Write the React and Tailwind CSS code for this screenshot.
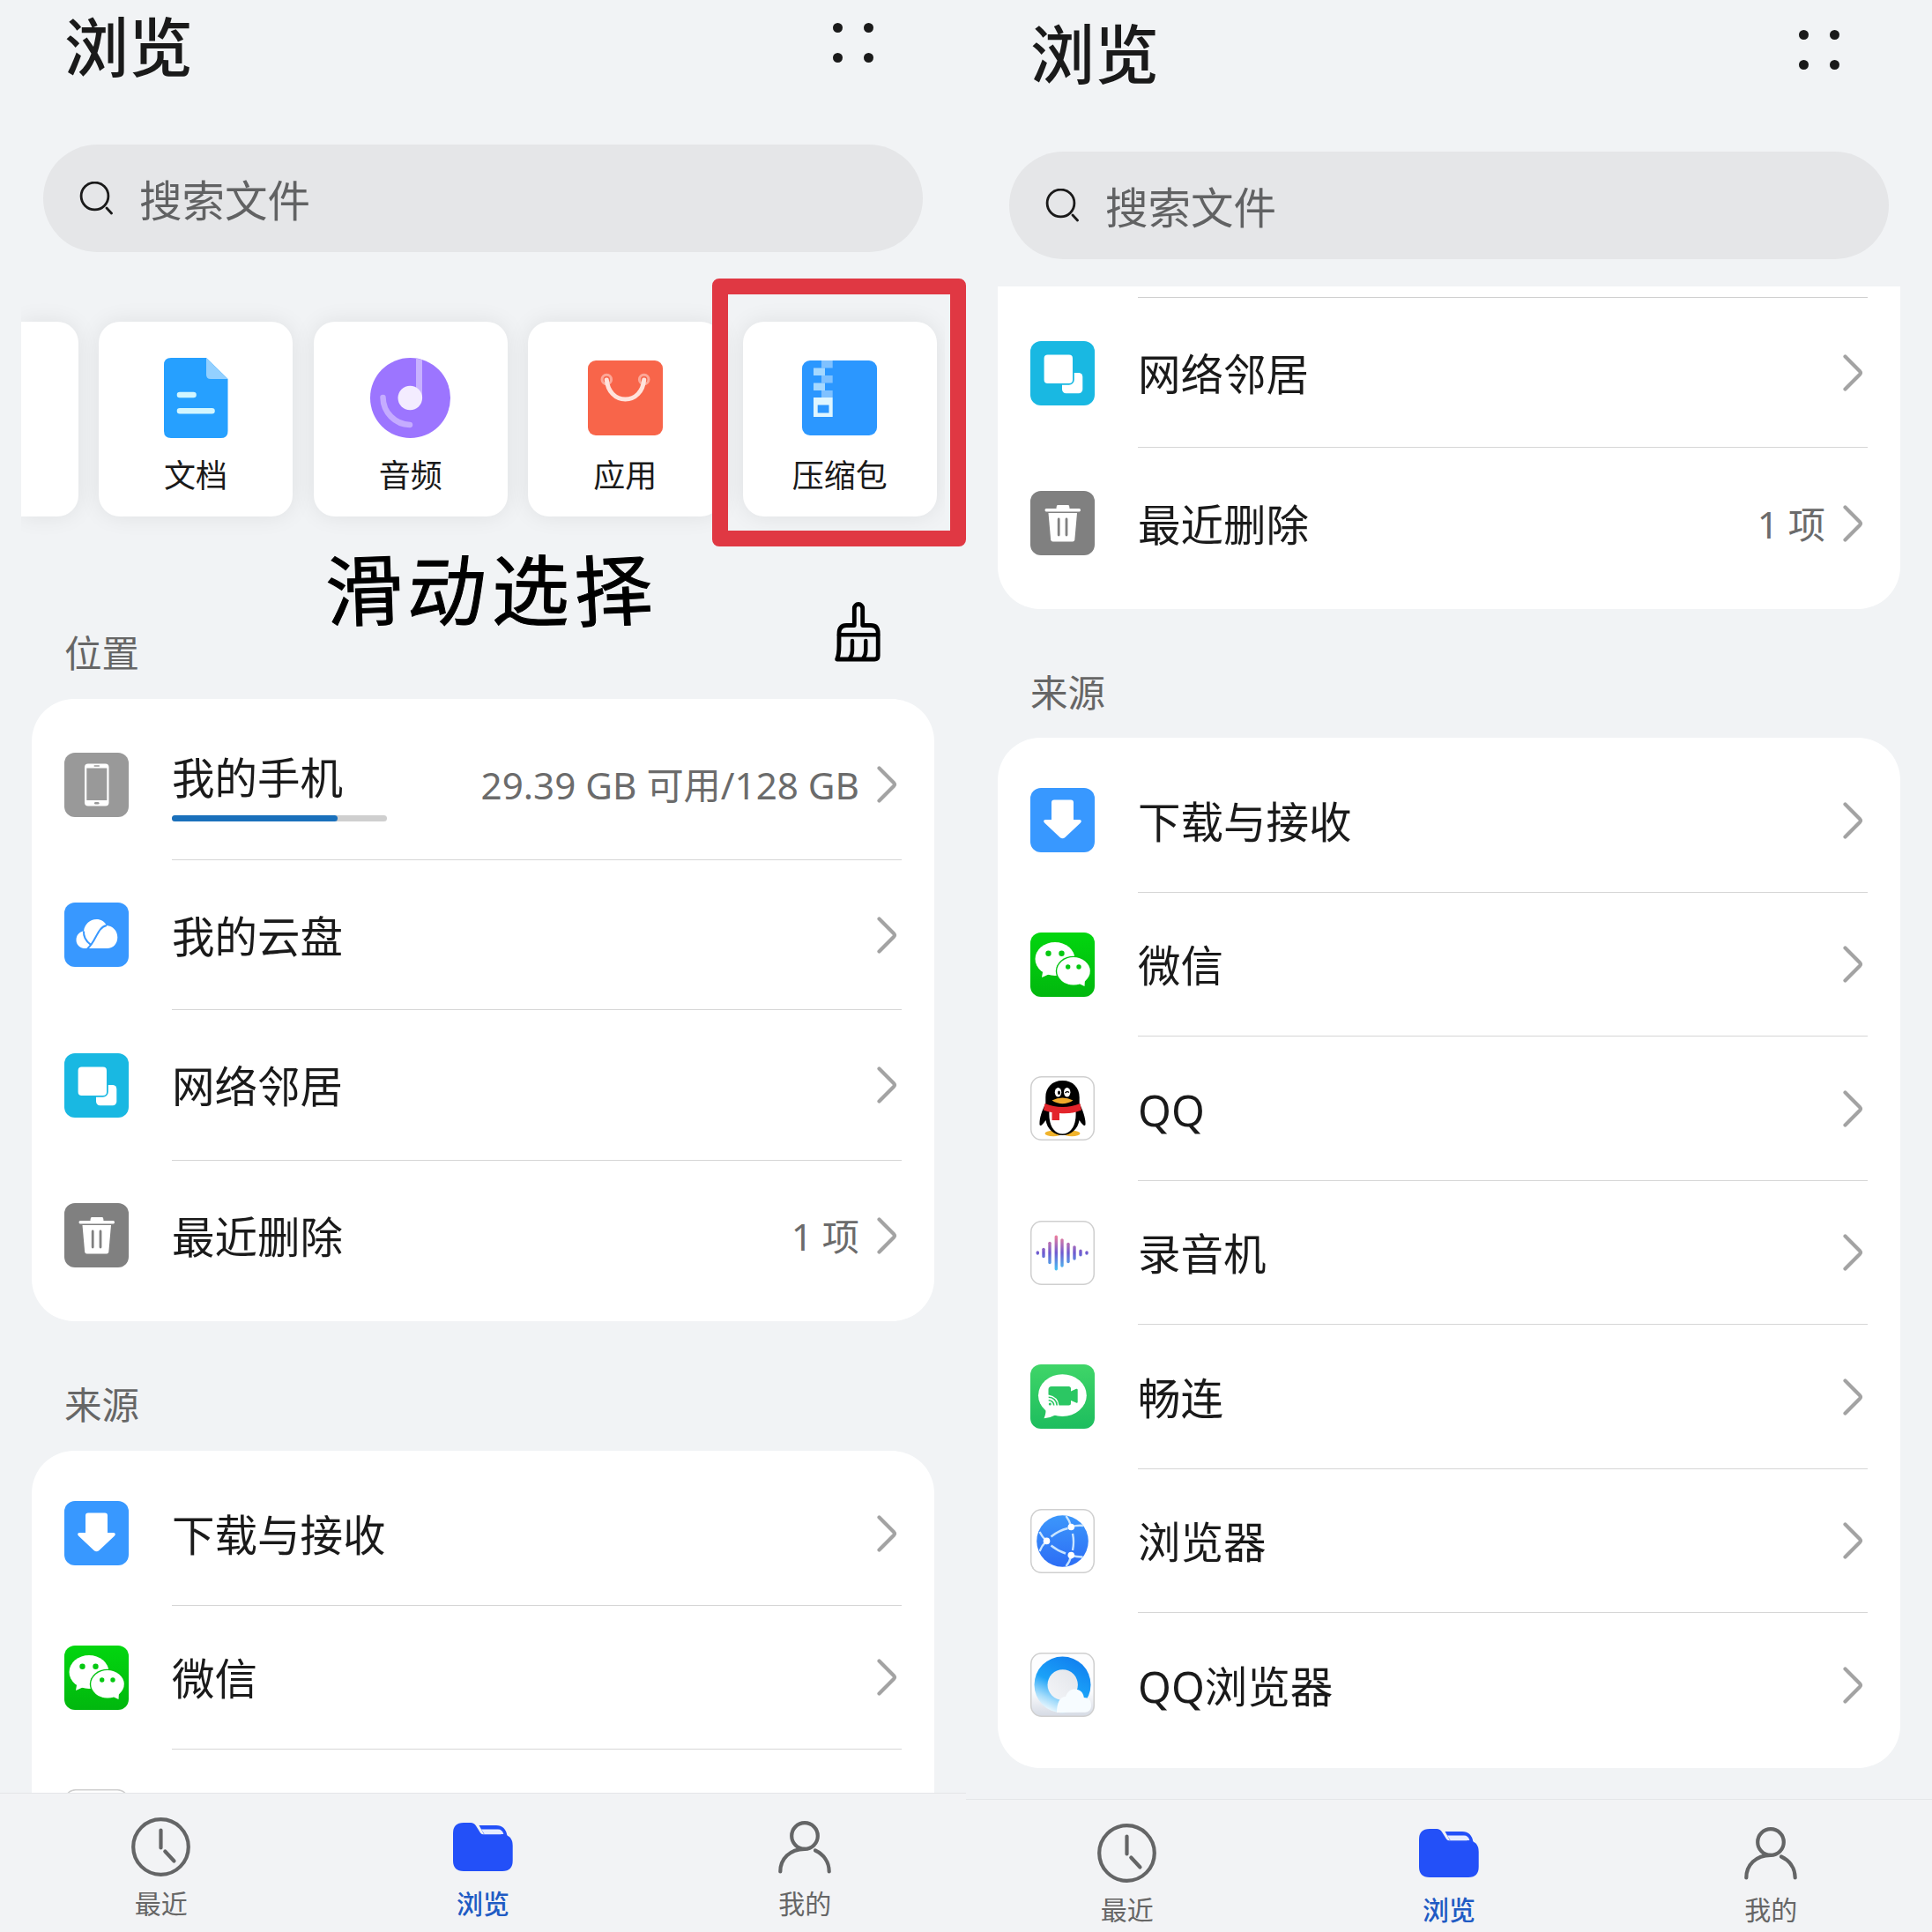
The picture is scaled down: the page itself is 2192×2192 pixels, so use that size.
import React from 'react';

//設定・検索など、両方の画面で使う小さなアイコン
function SearchIcon() {
  return (
    <svg className="w-[38px] h-[38px]" viewBox="0 0 38 38" fill="none" stroke="#1a1a1a" strokeWidth="2.8" strokeLinecap="round">
      <circle cx="17.5" cy="16.5" r="15.4" />
      <path d="M31 30L36.5 36" />
    </svg>
  );
}

function Chevron() {
  return (
    <svg className="w-[23px] h-[42px] shrink-0" viewBox="0 0 23 42" fill="none" stroke="#a3a3a3" strokeWidth="4.2" strokeLinecap="round" strokeLinejoin="round">
      <path d="M2.5 2.5L19.2 19.3Q20.7 21 19.2 22.7L2.5 39.5" />
    </svg>
  );
}

function BroomIcon() {
  return (
    <svg className="w-[53px] h-[68px]" viewBox="0 0 53 68" fill="none" stroke="#000" strokeWidth="4.8" strokeLinecap="round" strokeLinejoin="round">
      <path d="M22.3 26.5V7.2a4.7 4.7 0 0 1 9.4 0V26.5H41q8.2 0 8.2 9V61q0 4-4 4H2.6Q5 60 5 50V35.5q0-9 8.2-9H22.3" />
      <path d="M5 37.3H49" strokeWidth="4.4" />
      <path d="M20 44V55Q20 60 17 64M35.3 44V55Q35.3 60 32.3 64" strokeWidth="4.4" />
    </svg>
  );
}

//カテゴリーカードのアイコン
function DocIcon() {
  return (
    <svg className="w-[73px] h-[91px]" viewBox="0 0 73 91">
      <path d="M8 0H48L72.500 24V83q0 8-8 8H8q-8 0-8-8V8Q0 0 8 0z" fill="#26a0ff" />
      <path d="M48 0L72.500 24H53q-5 0-5-5z" fill="#93d0ff" />
      <path d="M18 42H33.500M18 60.300H54.500" stroke="#d2f6ff" strokeWidth="6.600" strokeLinecap="round" />
    </svg>
  );
}

function AudioIcon() {
  return (
    <svg className="w-[91px] h-[91px]" viewBox="0 0 91 91">
      <circle cx="45.500" cy="45.500" r="45.500" fill="#9c75ff" />
      <path d="M52 .5L59 2.200V46H52z" fill="#c8b1ff" />
      <circle cx="45.300" cy="45.500" r="13.800" fill="#f3ecff" />
      <path d="M14.500 45A31.500 31.500 0 0 0 45 76" fill="none" stroke="#c5acff" strokeWidth="6.500" strokeLinecap="round" />
    </svg>
  );
}

function BagIcon() {
  return (
    <svg className="w-[85px] h-[85px]" viewBox="0 0 85 85">
      <rect width="85" height="85" rx="9" fill="#f8654a" />
      <circle cx="21.300" cy="21.500" r="5.300" fill="none" stroke="#fca797" strokeWidth="3" />
      <circle cx="63.700" cy="21.500" r="5.300" fill="none" stroke="#fca797" strokeWidth="3" />
      <path d="M21.300 22C22.500 35 31 44 42.500 44S62.500 35 63.700 22" fill="none" stroke="#ffe3dc" strokeWidth="5" strokeLinecap="round" />
    </svg>
  );
}

function ZipIcon() {
  return (
    <svg className="w-[85px] h-[85px]" viewBox="0 0 85 85">
      <rect width="85" height="85" rx="9" fill="#2b97ff" />
      <path d="M22 0H34.700V8.500H22zM22 17H34.700V25.500H22zM22 34H34.700V42H22z" fill="#7fc1ff" />
      <path d="M13 8.500H26V17H13zM13 25.500H26V34H13z" fill="#a5d8ff" />
      <path fillRule="evenodd" d="M13 42H34.700V64H13zM17.700 50.500V59.500H30.500V50.500z" fill="#dff6ff" />
    </svg>
  );
}

//リストのアイコン（すべて 73 x 73）
function Tile({ fill, border, children }) {
  return (
    <svg className="w-[73px] h-[73px] shrink-0" viewBox="0 0 73 73">
      {border
        ? <rect x=".75" y=".75" width="71.500" height="71.500" rx="12" fill={fill} stroke="#cfcfcf" strokeWidth="1.500" />
        : <rect width="73" height="73" rx="12" fill={fill} />}
      {children}
    </svg>
  );
}

function PhoneTile() {
  return (
    <Tile fill="#999999">
      <rect x="23" y="12.500" width="27.500" height="48" rx="4" fill="#fff" />
      <rect x="25.300" y="17.500" width="23" height="36.500" fill="#999" />
      <rect x="33.500" y="14.300" width="6.500" height="1.500" rx=".7" fill="#999" />
      <rect x="34" y="56" width="5.500" height="2.600" rx="1.300" fill="#999" />
    </Tile>
  );
}

function CloudTile() {
  return (
    <Tile fill="#3898ff">
      <path d="M22 52C16.500 51 13.500 47 13.500 42.500C13.500 37 17 33 22 32.500C23 24.500 29 19 36.500 19C41.500 19 45.500 21.500 48 26C55 26.500 60.300 32 60.300 39.500C60.300 46.500 55.500 52 48.500 52z" fill="#fff" />
      <path d="M22 32.500C21.500 40 25 44 29.500 47.500M48 26C37 28 36.500 44 26 52.500" fill="none" stroke="#3898ff" strokeWidth="2" />
    </Tile>
  );
}

function NetworkTile() {
  return (
    <Tile fill="#19b8e2">
      <rect x="36" y="36" width="23.300" height="23.300" rx="4.500" fill="#fff" />
      <rect x="14.700" y="14.700" width="34.200" height="34.200" rx="5" fill="#fff" stroke="#19b8e2" strokeWidth="1.800" />
    </Tile>
  );
}

function TrashTile() {
  return (
    <Tile fill="#808080">
      <path d="M31 16H43Q44.300 16 44.500 20H55.500Q57 20 57 21.800T55.500 23.500H18Q16.500 23.500 16.500 21.800T18 20H29.500Q29.700 16 31 16z" fill="#fff" />
      <path d="M20.500 25H53L50.300 55.500Q50 57.500 48 57.500H25.500Q23.500 57.500 23.200 55.500z" fill="#fff" />
      <path d="M32.200 32V50M41 32V50" stroke="#808080" strokeWidth="2.800" strokeLinecap="round" />
    </Tile>
  );
}

function DownloadTile() {
  return (
    <Tile fill="#3898ff">
      <path d="M27 13.500H46Q49 13.500 49 16.500V36H56Q59 36.500 57 39.500L39.500 56Q36.500 58.500 33.500 56L16 39.500Q13.800 36.500 17 36H24V16.500Q24 13.500 27 13.500z" fill="#fff" />
    </Tile>
  );
}

function WechatTile() {
  return (
    <Tile fill="url(#wechat)">
      <defs>
        <linearGradient id="wechat" x1="0" y1="0" x2="0" y2="1">
          <stop offset="0" stopColor="#02d60f" />
          <stop offset="1" stopColor="#01b70e" />
        </linearGradient>
      </defs>
      <ellipse cx="28" cy="30" rx="22.500" ry="19" fill="#fff" />
      <path d="M14.500 42L13 51L23 46.500z" fill="#fff" />
      <circle cx="20.500" cy="23.700" r="3.200" fill="#05c811" />
      <circle cx="35.500" cy="23.700" r="3.200" fill="#05c811" />
      <ellipse cx="49" cy="43.800" rx="20.200" ry="17.100" fill="#02c30f" />
      <ellipse cx="49" cy="43.800" rx="18.800" ry="15.700" fill="#fff" />
      <path d="M62 53L61.500 61L53 57z" fill="#fff" />
      <circle cx="42.700" cy="39" r="2.700" fill="#05c811" />
      <circle cx="55" cy="39" r="2.700" fill="#05c811" />
    </Tile>
  );
}

function QQTile() {
  return (
    <Tile fill="#fff" border>
      <ellipse cx="26" cy="65" rx="9.500" ry="3.200" fill="#f0b32c" />
      <ellipse cx="47" cy="65" rx="9.500" ry="3.200" fill="#f0b32c" />
      <path d="M36.500 5C24.500 5 17.300 13 17.300 24V31C14.500 37 10 46 10.500 55Q11.500 58.500 17.500 50C19 60 27 67 36.500 67S54 60 55.500 50Q61.500 58.500 62.500 55C63 46 58.500 37 55.700 31V24C55.700 13 48.500 5 36.500 5z" fill="#000" />
      <path d="M21.500 40Q36.500 44 51.500 40C52.500 54 47 65.500 36.500 65.500S20.500 54 21.500 40z" fill="#fff" />
      <path d="M16.500 31Q36.500 39 56.500 31L58 38.500Q45 43.500 33 42V50H24.500V41Q19 40 15 38.500z" fill="#e3242b" />
      <ellipse cx="31.500" cy="18.300" rx="3.700" ry="5.300" fill="#fff" />
      <ellipse cx="41.700" cy="18.300" rx="3.700" ry="5.300" fill="#fff" />
      <ellipse cx="32.500" cy="18.800" rx="1.500" ry="2.200" fill="#000" />
      <path d="M39.500 19.200Q41.500 16.500 44 18.500" fill="none" stroke="#000" strokeWidth="1.300" />
      <path d="M24.500 27.500Q36.500 21.500 48.500 27.500Q36.500 35 24.500 27.500z" fill="#f0a92a" />
    </Tile>
  );
}

//[x, 高さ]
const bars = [[8.3, 4.5], [15, 11.5], [22, 25.5], [29.3, 40], [36, 32.5], [43, 23.5], [50, 16.5], [57, 8], [64, 4.5]];

function RecorderTile() {
  return (
    <Tile fill="#fff" border>
      <defs>
        <linearGradient id="wave" gradientUnits="userSpaceOnUse" x1="0" y1="16" x2="0" y2="57">
          <stop offset="0" stopColor="#f4809a" />
          <stop offset=".5" stopColor="#6f5bd0" />
          <stop offset="1" stopColor="#45c8f5" />
        </linearGradient>
      </defs>
      {bars.map(([x, h]) => (
        <rect key={x} x={x - 1.7} y={36.4 - h / 2} width="3.400" height={h} rx="1.700" fill="url(#wave)" />
      ))}
    </Tile>
  );
}

function MeetimeTile() {
  return (
    <Tile fill="url(#meetime)">
      <defs>
        <linearGradient id="meetime" x1="0" y1="0" x2="0" y2="1">
          <stop offset="0" stopColor="#3fd568" />
          <stop offset="1" stopColor="#1dbd5e" />
        </linearGradient>
      </defs>
      <ellipse cx="36.400" cy="35.200" rx="27.400" ry="23.900" fill="#fff" />
      <path d="M17 49Q18.500 54 15.500 61.300Q23 60.500 29.500 57z" fill="#fff" />
      <path d="M24 25H43.500Q46 25 46 27.500V30.500L52 27.800Q53.700 27.300 53.700 29V42.500Q53.700 44.200 52 43.500L46 41V44Q46 46.500 43.500 46.500H32.500Q31.500 36.500 20.500 34.500V28.500Q20.500 25 24 25z" fill="#2bc763" />
      <path d="M20.700 37.200A9.500 9.500 0 0 1 30.200 46.500M20.700 40.700A6 6 0 0 1 26.700 46.500" fill="none" stroke="#2bc763" strokeWidth="1.600" />
      <circle cx="22.300" cy="45" r="1.500" fill="#2bc763" />
    </Tile>
  );
}

function BrowserTile() {
  return (
    <Tile fill="#fff" border>
      <defs>
        <linearGradient id="globe" x1="0" y1="0" x2="0" y2="1">
          <stop offset="0" stopColor="#3c97fb" />
          <stop offset="1" stopColor="#2c6df5" />
        </linearGradient>
      </defs>
      <circle cx="36.500" cy="36.500" r="29.300" fill="url(#globe)" />
      <path d="M23.500 31.500Q32 24.500 42.500 22M48 28Q50 37.500 48 47M23.500 41.500Q31 47.500 40 50.500M46.300 20.300Q44.500 13 40.500 8M46.300 20.300Q53 18.300 60 19M46.300 52.700Q53 54.700 59.500 54.500M46.300 52.700Q45 59.500 40.500 65M18.300 36.400Q13.500 32 10.500 26M18.300 36.400Q13 41.500 10.500 48" fill="none" stroke="#c9e5ff" strokeWidth="2.400" />
      <circle cx="18.500" cy="36.400" r="3.800" fill="#fff" />
      <circle cx="46.300" cy="20.500" r="3.800" fill="#fff" />
      <circle cx="46.300" cy="52.600" r="3.800" fill="#fff" />
    </Tile>
  );
}

function QQBrowserTile() {
  return (
    <Tile fill="url(#qbbg)" border>
      <defs>
        <linearGradient id="qbbg" x1="0" y1="0" x2="0" y2="1">
          <stop offset=".6" stopColor="#fdfdfe" />
          <stop offset="1" stopColor="#d5dae4" />
        </linearGradient>
        <linearGradient id="qbring" gradientUnits="userSpaceOnUse" x1="52" y1="10" x2="24" y2="68">
          <stop offset="0" stopColor="#1283f0" />
          <stop offset=".5" stopColor="#1ba2f8" />
          <stop offset=".8" stopColor="#a4dcfb" />
          <stop offset="1" stopColor="#f2fafe" />
        </linearGradient>
        <linearGradient id="qbball" x1="1" y1="0" x2="0" y2="1">
          <stop offset="0" stopColor="#e2e5ea" />
          <stop offset="1" stopColor="#f4f5f8" />
        </linearGradient>
      </defs>
      <circle cx="36.500" cy="36.500" r="32" fill="url(#qbring)" />
      <circle cx="36.700" cy="36.500" r="17.200" fill="url(#qbball)" />
      <path d="M30 68C30 58 33 50 40 50C42 44 46 41.500 50.500 41.500C56 41.500 60 45 60.800 51C66 51 69 54 69 60C69 65 66 67.700 62 67.700z" fill="#f7fcff" />
    </Tile>
  );
}

//下部ナビゲーションのアイコン
function ClockIcon() {
  return (
    <svg className="w-[67px] h-[67px]" viewBox="0 0 67 67" fill="none" stroke="#646566" strokeWidth="4.200" strokeLinecap="round">
      <circle cx="33.500" cy="33.500" r="31.300" />
      <path d="M33.500 14.500V34.500M38.300 38.500L48.500 49.500" />
    </svg>
  );
}

function FolderIcon() {
  return (
    <svg className="w-[68px] h-[55px]" viewBox="0 0 68 55">
      <path d="M0 12Q0 0 12 0H20Q24 0 26 3.500L31 11.500Q32 13.200 34 13.200H56Q67.700 14 67.700 26V43Q67.700 55 56 55H12Q0 55 0 43z" fill="#2350f8" />
      <path d="M29.500 3H49Q59.500 3 61.500 15L59 18L54 13H35z" fill="#2350f8" />
      <path d="M32 7.500H51Q56 7.500 57.300 13H35.500z" fill="#e6ecff" />
    </svg>
  );
}

function PersonIcon() {
  return (
    <svg className="w-[60px] h-[60px]" viewBox="0 0 60 60" fill="none" stroke="#646566" strokeWidth="4.200" strokeLinecap="round">
      <circle cx="30" cy="17" r="14.800" />
      <path d="M30 31.800C13 32 2.300 43 2.300 57.500M42 33.500C51.500 38 57.700 46.500 57.700 57.500" />
    </svg>
  );
}

//タイトルと検索欄
function Header({ className }) {
  return (
    <header className={className}>
      <div className="flex items-start justify-between pl-[73px] pr-[105px]">
        <h1 className="mt-px text-[73px] leading-[72px] font-medium text-[#1a1a1a]">浏览</h1>
        <div className="grid grid-cols-2 gap-x-6 gap-y-[23px] mt-[10px]">
          <span className="size-[11px] rounded-full bg-[#1a1a1a]" />
          <span className="size-[11px] rounded-full bg-[#1a1a1a]" />
          <span className="size-[11px] rounded-full bg-[#1a1a1a]" />
          <span className="size-[11px] rounded-full bg-[#1a1a1a]" />
        </div>
      </div>
      <div className="mt-[75px] mx-[49px] h-[122px] rounded-full bg-[#e5e6e8] flex items-center pl-[41px]">
        <SearchIcon />
        <span className="ml-[30px] mt-[3px] text-[48.500px] leading-[48px] text-[#616263]">搜索文件</span>
      </div>
    </header>
  );
}

function Category({ icon, label }) {
  return (
    <div className="w-[220px] h-[221px] shrink-0 rounded-3xl bg-white shadow-[0_0_26px_rgba(0,0,0,0.08)] flex flex-col items-center">
      <div className="mt-[41px] h-[91px] flex items-center">{icon}</div>
      <span className="mt-[25px] text-[36px] leading-[36px] text-[#1a1a1a]">{label}</span>
    </div>
  );
}

function Row({ icon, label, detail, progress, className = 'h-[163.500px]', last }) {
  return (
    <div className={`flex items-center ${className}`}>
      {icon}
      <div className={`ml-[49px] flex-1 h-full flex items-center ${last ? '' : 'border-b border-[#d6d6d6]'}`}>
        <div className="flex-1 pt-[3px]">
          <p className="text-[48.500px] leading-[48px] text-[#1a1a1a] whitespace-nowrap">{label}</p>
          {progress && (
            <div className="mt-[19px] -mb-[8px] w-[244px] h-[7px] rounded-full bg-[#cfcfcf] overflow-hidden">
              <div className="h-full rounded-r-full bg-[#1a70bb]" style={{ width: `${progress}%` }} />
            </div>
          )}
        </div>
        {detail && <span className="mr-[20px] mt-[3px] text-[42.200px] leading-[42px] text-[#6b6b6b] whitespace-nowrap">{detail}</span>}
        <div className="mr-[5px] pt-px"><Chevron /></div>
      </div>
    </div>
  );
}

function SectionLabel({ children }) {
  return (
    <div className="h-[147px] flex items-end pl-[73px] pb-[31px]">
      <h2 className="text-[42.500px] leading-[42px] text-[#666]">{children}</h2>
    </div>
  );
}

function TabBar({ className }) {
  return (
    <nav className={`shrink-0 grid grid-cols-3 border-t border-[#e4e6e8] bg-[#f2f3f5] text-[30px] leading-[30px] text-[#666] ${className}`}>
      <div className="flex flex-col items-center pt-[27px]">
        <div className="h-[67px] flex items-center"><ClockIcon /></div>
        <span className="mt-4">最近</span>
      </div>
      <div className="flex flex-col items-center pt-[27px] text-[#1f5bc4]">
        <div className="h-[67px] flex items-center"><FolderIcon /></div>
        <span className="mt-4 font-medium">浏览</span>
      </div>
      <div className="flex flex-col items-center pt-[27px]">
        <div className="h-[67px] flex items-center"><PersonIcon /></div>
        <span className="mt-4">我的</span>
      </div>
    </nav>
  );
}

//手書き風のメモ（一文字ずつ少しだけ傾ける）
function Memo() {
  return (
    <p className="self-start mt-[13px] ml-[4px] flex gap-[6px] text-[88px] leading-[90px] text-black [-webkit-text-stroke:1px_#000]">
      <span className="-rotate-2">滑</span>
      <span className="-skew-x-6">动</span>
      <span className="rotate-1">选</span>
      <span className="-rotate-3">择</span>
    </p>
  );
}

//左：スクロール前の画面
function LeftScreen() {
  return (
    <div className="w-[1096px] h-full flex flex-col overflow-hidden">
      <Header className="shrink-0 pt-4" />
      <main className="flex-1 min-h-0 overflow-hidden pt-[54px]">
        <div className="relative">
          <div className="ml-6 mr-6 h-[271px] overflow-hidden flex gap-[23.600px] pt-[25px]">
            <div className="w-[64.500px] h-[221px] shrink-0 rounded-r-3xl bg-white shadow-[0_0_26px_rgba(0,0,0,0.08)]" />
            <Category icon={<DocIcon />} label="文档" />
            <Category icon={<AudioIcon />} label="音频" />
            <Category icon={<BagIcon />} label="应用" />
            <Category icon={<ZipIcon />} label="压缩包" />
          </div>
          {/* 赤枠 */}
          <div className="absolute -top-6 right-0 w-[288px] h-[304px] rounded-lg border-[18px] border-[#e03843]" />
        </div>
        <div className="h-[182px] flex items-end justify-between pl-[73px] pr-[96px]">
          <h2 className="mb-[31px] text-[42.500px] leading-[42px] text-[#666]">位置</h2>
          <Memo />
          <div className="mb-[42px]"><BroomIcon /></div>
        </div>
        <div className="mx-[36px] rounded-[48px] bg-white py-3 pl-[37px] pr-[37px]">
          <Row className="h-[170.500px]" icon={<PhoneTile />} label="我的手机" detail="29.39 GB 可用/128 GB" progress={77} />
          <Row className="h-[170.500px]" icon={<CloudTile />} label="我的云盘" />
          <Row className="h-[170.500px]" icon={<NetworkTile />} label="网络邻居" />
          <Row className="h-[170.500px]" icon={<TrashTile />} label="最近删除" detail="1 项" last />
        </div>
        <SectionLabel>来源</SectionLabel>
        <div className="mx-[36px] rounded-t-[48px] bg-white pt-3 pl-[37px] pr-[37px]">
          <Row icon={<DownloadTile />} label="下载与接收" />
          <Row icon={<WechatTile />} label="微信" />
          {/* 三行目はアイコンの上端だけ見える */}
          <div className="flex items-center h-[163.500px]"><QQTile /></div>
        </div>
      </main>
      <TabBar className="h-[158px]" />
    </div>
  );
}

//右：下までスクロールした画面
function RightScreen() {
  return (
    <div className="w-[1096px] h-full flex flex-col overflow-hidden">
      <Header className="shrink-0 pt-6" />
      <main className="flex-1 min-h-0 overflow-hidden pt-[31px]">
        <div className="mx-[36px] rounded-b-[48px] bg-white py-3 pl-[37px] pr-[37px]">
          <div className="ml-[122px] border-t border-[#d0d0d0]" />
          <Row className="h-[170px]" icon={<NetworkTile />} label="网络邻居" />
          <Row className="h-[171px]" icon={<TrashTile />} label="最近删除" detail="1 项" last />
        </div>
        <SectionLabel>来源</SectionLabel>
        <div className="mx-[36px] rounded-[48px] bg-white py-3 pl-[37px] pr-[37px] -mt-px">
          <Row icon={<DownloadTile />} label="下载与接收" />
          <Row icon={<WechatTile />} label="微信" />
          <Row icon={<QQTile />} label="QQ" />
          <Row icon={<RecorderTile />} label="录音机" />
          <Row icon={<MeetimeTile />} label="畅连" />
          <Row icon={<BrowserTile />} label="浏览器" />
          <Row icon={<QQBrowserTile />} label="QQ浏览器" last />
        </div>
      </main>
      <TabBar className="h-[151px]" />
    </div>
  );
}

function App() {
  return (
    <div className="w-[2192px] h-[2192px] flex bg-[#f1f3f5] overflow-hidden font-['Noto_Sans','Noto_Sans_CJK_SC',sans-serif]">
      <LeftScreen />
      <RightScreen />
    </div>
  );
}

export default App;
